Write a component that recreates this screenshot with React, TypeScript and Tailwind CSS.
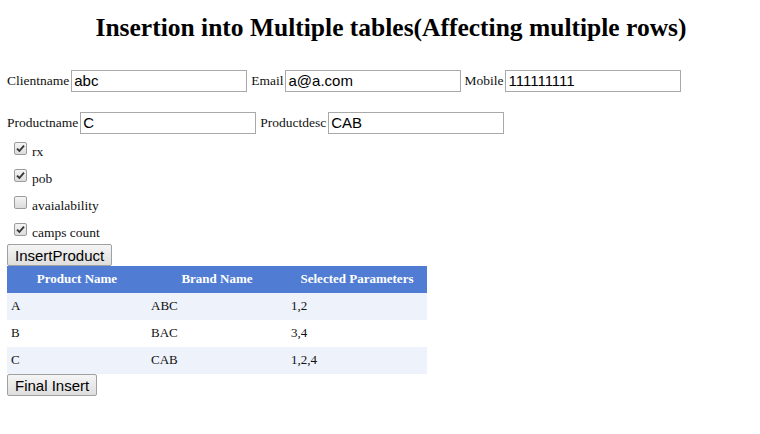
const serif = "font-['Liberation_Serif',serif]"
const sans = "font-['Liberation_Sans',Arial,sans-serif]"

function Field({ label, value, gap = "ml-[4px]" }: { label: string; value: string; gap?: string }) {
  return (
    <div className={`flex items-center ${gap}`}>
      <span className="text-[13.5px] text-[#111] mr-[2px]">{label}</span>
      <input
        readOnly
        value={value}
        className={`${sans} w-[176px] h-[22px] border border-[#a9a9a9] px-[2px] text-[15px] text-black outline-none`}
      />
    </div>
  )
}

function Check({ label, checked }: { label: string; checked: boolean }) {
  return (
    <div className="flex items-start h-[27px] pl-[7px]">
      <span className="mt-[8px] w-[13px] h-[13px] border border-[#9c9c9c] rounded-[2px] bg-gradient-to-b from-[#f4f4f4] to-[#dcdcdc] flex items-center justify-center">
        {checked && (
          <svg width="9" height="9" viewBox="0 0 9 9">
            <path d="M1 4.6 L3.4 7 L8 1.6" fill="none" stroke="#333" strokeWidth="1.8" />
          </svg>
        )}
      </span>
      <span className="ml-[5px] mt-[10px] text-[13.5px] leading-[16px] text-[#111]">{label}</span>
    </div>
  )
}

function Btn({ children }: { children: string }) {
  return (
    <button
      className={`${sans} h-[22px] px-[7px] text-[15px] text-black border border-[#a0a0a0] rounded-[2px] bg-gradient-to-b from-[#f5f5f5] to-[#dedede] leading-none`}
    >
      {children}
    </button>
  )
}

export default function App() {
  const rows = [
    ["A", "ABC", "1,2"],
    ["B", "BAC", "3,4"],
    ["C", "CAB", "1,2,4"],
  ]
  return (
    <div className={`${serif} w-[760px] h-[434px] bg-white px-[7px] text-black`}>
      <h1 className="text-center font-bold text-[25.5px] pt-[9px] pl-[22px] h-[57px]">
        Insertion into Multiple tables(Affecting multiple rows)
      </h1>
      <div className="flex items-center mt-[13px]">
        <Field label="Clientname" value="abc" gap="" />
        <Field label="Email" value="a@a.com" />
        <Field label="Mobile" value="111111111" gap="ml-[3px]" />
      </div>
      <div className="flex items-center mt-[20px]">
        <Field label="Productname" value="C" gap="" />
        <Field label="Productdesc" value="CAB" />
      </div>
      <div>
        <Check label="rx" checked />
        <Check label="pob" checked />
        <Check label="avaialability" checked={false} />
        <Check label="camps count" checked />
      </div>
      <div className="flex mt-[2px]">
        <Btn>InsertProduct</Btn>
      </div>
      <table className="w-[420px] border-collapse table-fixed text-[13px]">
        <thead>
          <tr className="bg-[#507dd3] text-white h-[27px]">
            <th className="w-[140px] font-bold pb-[2px]">Product Name</th>
            <th className="w-[140px] font-bold pb-[2px]">Brand Name</th>
            <th className="w-[140px] font-bold pb-[2px]">Selected Parameters</th>
          </tr>
        </thead>
        <tbody>
          {rows.map((r, i) => (
            <tr key={i} className={`h-[27px] ${i % 2 === 0 ? "bg-[#eef3fb]" : "bg-white"}`}>
              {r.map((c, j) => (
                <td key={j} className="pl-[4px] pb-[2px] text-[#111]">
                  {c}
                </td>
              ))}
            </tr>
          ))}
        </tbody>
      </table>
      <div className="flex">
        <Btn>Final Insert</Btn>
      </div>
    </div>
  )
}
